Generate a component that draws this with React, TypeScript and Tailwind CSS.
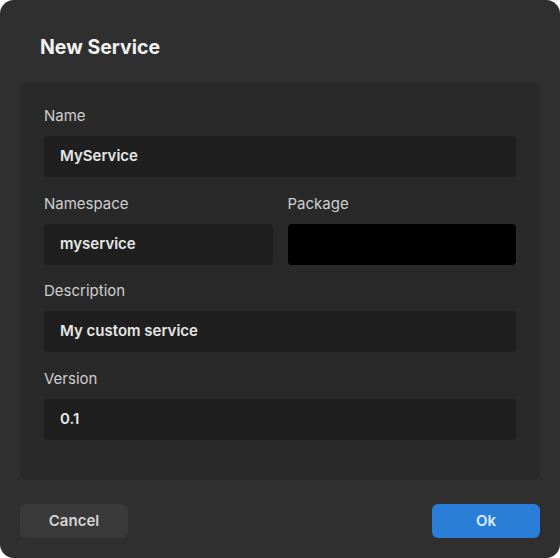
export default function App() {
  const font = { fontFamily: "Inter, 'Noto Sans', sans-serif" };
  return (
    <div className="w-[560px] h-[558px] bg-white" style={font}>
      <div className="w-[560px] h-[558px] bg-[#2f2f2f] rounded-[14px] flex flex-col px-5">
        {/* Header */}
        <div className="h-[82px] pt-[35px] pl-5">
          <h1 className="text-[19.5px] leading-[24px] font-bold text-[#f2f2f2]">New Service</h1>
        </div>

        {/* Form panel */}
        <div className="h-[398px] bg-[#292929] rounded-[7px] px-6 pt-6 flex flex-col">
          <Field label="Name" value="MyService" />
          <div className="flex gap-[15px] mt-[17px]">
            <div className="flex-1">
              <Field label="Namespace" value="myservice" />
            </div>
            <div className="flex-1">
              <Field label="Package" value="" dark />
            </div>
          </div>
          <div className="mt-4">
            <Field label="Description" value="My custom service" />
          </div>
          <div className="mt-[17px]">
            <Field label="Version" value="0.1" />
          </div>
        </div>

        {/* Footer */}
        <div className="flex justify-between mt-6">
          <button className="w-[108px] h-[34px] rounded-[6px] bg-[#3a3a3a] text-[15px] font-semibold text-[#d4d4d4]">
            Cancel
          </button>
          <button className="w-[108px] h-[34px] rounded-[6px] bg-[#2b7ed8] text-[15px] font-semibold text-[#dcebfa]">
            Ok
          </button>
        </div>
      </div>
    </div>
  );
}

function Field({ label, value, dark }: { label: string; value: string; dark?: boolean }) {
  return (
    <div className="flex flex-col">
      <label className="h-5 text-[15px] leading-5 text-[#cfcfcf]">{label}</label>
      <div
        className={`mt-[10px] h-[41px] rounded-[4px] flex items-center px-4 text-[15px] font-semibold text-[#e6e6e6] ${
          dark ? "bg-black" : "bg-[#1f1f1f]"
        }`}
      >
        {value}
      </div>
    </div>
  );
}
